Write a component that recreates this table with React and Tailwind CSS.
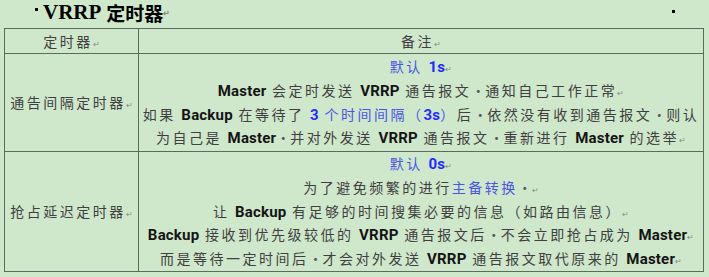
import React from "react";

const Mark = () => (
  <span className="text-[8px] leading-none text-[#8a8a8a] tracking-normal">↵</span>
);

const L = ({ children }) => (
  <span className="font-['Roboto'] font-bold text-[15px] leading-none text-[#141414] tracking-[0.2px]">
    {children}
  </span>
);

const B = ({ children }) => (
  <span className="font-['Roboto'] font-bold text-[15px] leading-none text-[#1f2bff] tracking-[0.2px]">
    {children}
  </span>
);

const C = ({ children }) => <span className="text-[#4a55e6]">{children}</span>;

const Dot = () => <span className="text-[#555] tracking-[0px]">·</span>;

const Line = ({ children }) => (
  <div className="h-[23.8px] leading-[23.8px] flex items-center justify-center whitespace-pre">
    <span>{children}</span>
  </div>
);

export default function App() {
  return (
    <div className="w-[709px] h-[277px] bg-[#cfe7cb] font-['Noto_Sans_CJK_SC',sans-serif] text-[#3f3f3f] overflow-hidden">
      <div className="h-[28px] flex items-center justify-between pl-[35px] pr-[34px]">
        <div className="flex items-center font-bold text-black leading-none mt-[-3px]">
          <span className="w-[3px] h-[3px] bg-black mr-[5px] mt-[-6px]" />
          <span className="font-['Liberation_Serif'] text-[21px]">VRRP</span>
          <span className="ml-[5px] text-[19px] font-semibold">定时器</span>
          <Mark />
        </div>
        <span className="w-[3px] h-[3px] bg-black mt-[-6px]" />
      </div>
      <table className="ml-[4px] w-[700px] table-fixed border-collapse text-[14px] tracking-[2.5px]">
        <colgroup>
          <col className="w-[134px]" />
          <col />
        </colgroup>
        <tbody>
          <tr className="h-[25px]">
            <td className="border border-[#5d6b5d] text-center leading-[22px] p-0">
              定时器<Mark />
            </td>
            <td className="border border-[#5d6b5d] text-center leading-[22px] p-0">
              备注<Mark />
            </td>
          </tr>
          <tr className="h-[98px]">
            <td className="border border-[#5d6b5d] text-center p-0 whitespace-nowrap">
              通告间隔定时器<Mark />
            </td>
            <td className="border border-[#5d6b5d] text-center p-0">
              <Line>
                <C>默认</C> <B>1s</B>
                <Mark />
              </Line>
              <Line>
                <L>Master</L> 会定时发送 <L>VRRP</L> 通告报文<Dot />通知自己工作正常
                <Mark />
              </Line>
              <Line>
                如果 <L>Backup</L> 在等待了 <B>3</B> <C>个时间间隔（</C>
                <B>3s</B>
                <C>）</C>后<Dot />依然没有收到通告报文<Dot />则认
              </Line>
              <Line>
                为自己是 <L>Master</L>
                <Dot />并对外发送 <L>VRRP</L> 通告报文<Dot />重新进行 <L>Master</L> 的选举
                <Mark />
              </Line>
            </td>
          </tr>
          <tr className="h-[120px]">
            <td className="border border-[#5d6b5d] text-center p-0 whitespace-nowrap">
              抢占延迟定时器<Mark />
            </td>
            <td className="border border-[#5d6b5d] text-center p-0">
              <Line>
                <C>默认</C> <B>0s</B>
                <Mark />
              </Line>
              <Line>
                为了避免频繁的进行<C>主备转换</C>
                <Dot />
                <Mark />
              </Line>
              <Line>
                让 <L>Backup</L> 有足够的时间搜集必要的信息（如路由信息）
                <Mark />
              </Line>
              <Line>
                <L>Backup</L> 接收到优先级较低的 <L>VRRP</L> 通告报文后<Dot />不会立即抢占成为 <L>Master</L>
                <Mark />
              </Line>
              <Line>
                而是等待一定时间后<Dot />才会对外发送 <L>VRRP</L> 通告报文取代原来的 <L>Master</L>
                <Mark />
              </Line>
            </td>
          </tr>
        </tbody>
      </table>
    </div>
  );
}
